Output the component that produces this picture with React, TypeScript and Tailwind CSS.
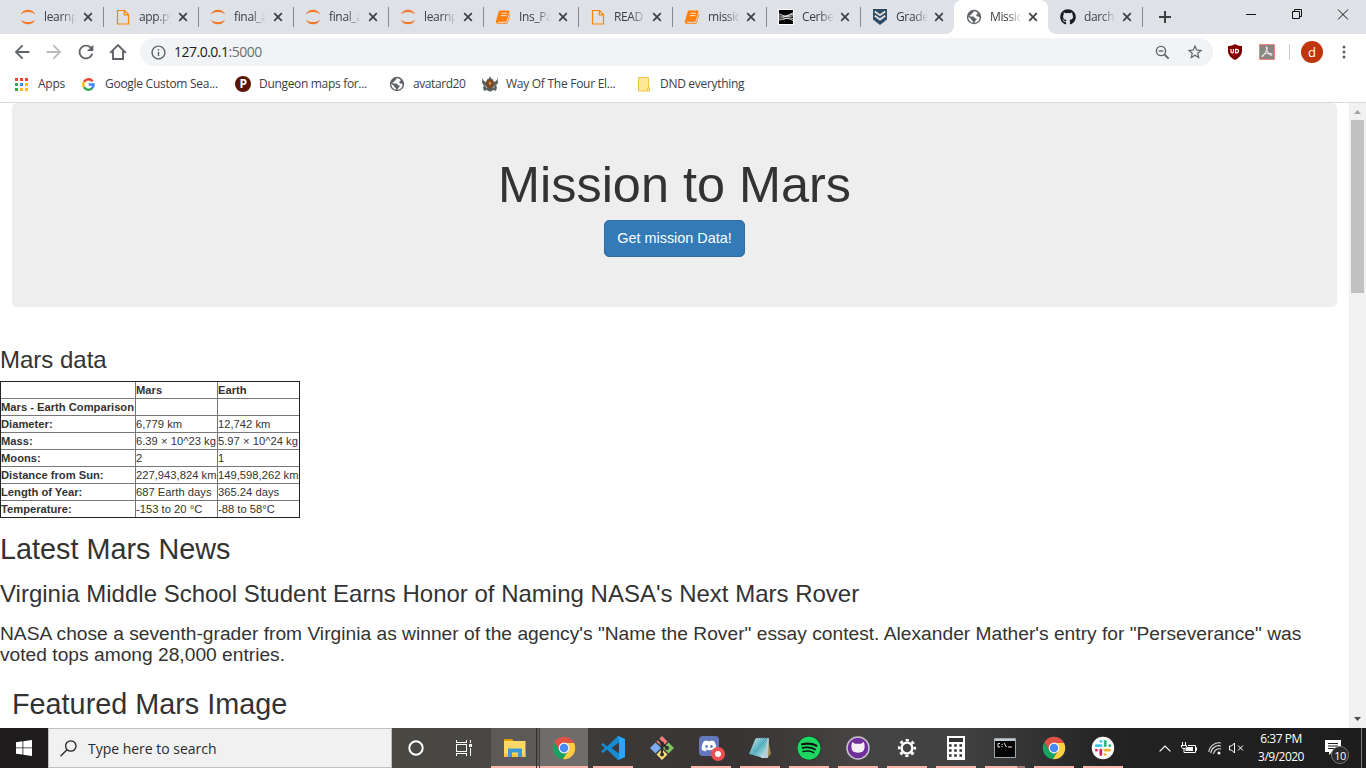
import type { ReactNode } from "react";
import { FaGithub, FaSpotify, FaDiscord } from "react-icons/fa";
import { MdArrowBack, MdArrowForward, MdRefresh, MdInfoOutline, MdStarBorder } from "react-icons/md";

function Globe() {
  return (
    <svg width="16" height="16" viewBox="0 0 16 16">
      <circle cx="8" cy="8" r="7.200" fill="#5f6368" />
      <path d="M7.600 2.200c-.8.900-.2 1.600-1.300 2-1.200.3-.6 1.700-1.800 1.900-.9.200-1 .9-.4 1.400h3.200c1.100 0 1.300.9 1.300 1.700h1.300c1 0 1 1.500.1 2.100-.9.500-.8 1.500-1.700 2.500 3-.2 5.200-2.600 5.400-5.400-.9-.2-1.100-.9-1.900-.9-1.200 0-1.700-.6-1.500-1.500.2-.8 1.300-.9 1.400-1.800-.1-.9-2.300-2.200-4.100-2ZM2.200 7.800c0 3 2.100 5.500 4.900 5.900.1-1.100-.2-1.600-1-2-.9-.4-.5-1.500-1.300-2Z" fill="#fff" />
    </svg>
  );
}

function Jupyter() {
  return (
    <svg width="16" height="16" viewBox="0 0 16 16" fill="#f37726">
      <path d="M.7 5.600C1.900 2.400 4.900.7 8 .7s6.100 1.700 7.300 4.900C13.400 3.800 10.800 3 8 3S2.600 3.800.7 5.600Z" />
      <path d="M.7 10.400c1.200 3.200 4.200 4.900 7.300 4.900s6.100-1.700 7.300-4.900C13.400 12.200 10.800 13 8 13s-5.400-.8-7.300-2.600Z" />
    </svg>
  );
}

function FileIcon() {
  return (
    <svg width="16" height="16" viewBox="0 0 16 16" fill="none" stroke="#ff8400" strokeWidth="1.200">
      <path d="M2.500 1.500h7l4 4v9.500h-11zM9.300 1.500v4.300h4.200" />
    </svg>
  );
}

function BookIcon() {
  return (
    <svg width="16" height="16" viewBox="0 0 16 16">
      <path d="M5.200 1.500h8.100c1 0 1.400.7 1.100 1.600l-2.600 8.500c-.2.700-.8 1.100-1.500 1.100H3.500c-.8 0-1.100.7-.5 1.100h7.800c.8 0 1.300-.4 1.500-1.100l2.400-7.900.5.900-2.300 7.600c-.3 1-1 1.500-2 1.500H3c-1.600 0-2.700-1.500-2-2.900L3.700 2.600c.3-.7.8-1.100 1.500-1.100Z" fill="#ff7f0e" />
      <path d="M6.600 4.300h5.500M5.900 6.600h5.500" stroke="#ffe0c0" strokeWidth="1" />
    </svg>
  );
}

function CerberusIcon() {
  return (
    <svg width="16" height="16" viewBox="0 0 16 16">
      <path fill="#fff" d="M0 0h16v16H0z" />
      <path fill="#000" d="M1 1h14v14H1z" />
      <path d="M1 5c4 .5 5 4 14 0M1 7c4 0 7 1.500 14-.2M1 9c5 .5 8-3 14-5M1 11c5-.5 7-3 14-1.500M5 10.500c4-2 6-1 10 1" stroke="#fff" strokeWidth=".8" fill="none" />
    </svg>
  );
}

function ShieldIcon() {
  return (
    <svg width="16" height="18" viewBox="0 0 16 18">
      <path d="M1 1h14v10.500L8 17l-7-5.500Z" fill="#2d4a63" />
      <path d="m2.800 3.500 5.200 3.700 5.200-3.700M2.800 7.800 8 11.500l5.200-3.700" stroke="#dee1e6" strokeWidth="1.900" fill="none" />
    </svg>
  );
}

const tabs: { title: string; icon: ReactNode }[] = [
  { title: "learnp", icon: <Jupyter /> },
  { title: "app.py", icon: <FileIcon /> },
  { title: "final_a", icon: <Jupyter /> },
  { title: "final_a", icon: <Jupyter /> },
  { title: "learnp", icon: <Jupyter /> },
  { title: "Ins_Pa", icon: <BookIcon /> },
  { title: "READ", icon: <FileIcon /> },
  { title: "missic", icon: <BookIcon /> },
  { title: "Cerbe", icon: <CerberusIcon /> },
  { title: "Grade", icon: <ShieldIcon /> },
  { title: "Missic", icon: <Globe /> },
  { title: "darch", icon: <FaGithub size={16} color="#1b1f23" /> },
];

function TabStrip() {
  return (
    <div className="flex h-[34px] bg-[#dee1e6] pl-2">
      {tabs.map((t, i) => {
        const active = i === 10;
        const line = i > 0 && i < 10;
        return (
          <div
            key={i}
            className={`relative flex h-[34px] shrink-0 items-center ${i < 6 ? "w-[95px]" : "w-[94px]"} ${active ? "rounded-t-lg bg-white" : ""}`}
          >
            <span className={`h-5 w-px ${line ? "bg-[#85888d]" : ""}`} />
            <span className="ml-[11px] flex w-4 shrink-0 justify-center">{t.icon}</span>
            <span className="ml-2 w-[32px] shrink-0 whitespace-nowrap text-[12px] leading-4 tracking-[-0.35px] text-[#3c4043] [mask-image:linear-gradient(to_right,black_55%,transparent_100%)]">
              {t.title}
            </span>
            <svg className={`shrink-0 ${i < 6 ? "ml-[7px]" : "ml-[6px]"}`} width="10" height="10" viewBox="0 0 10 10" stroke="#3c4043" strokeWidth="1.700">
              <path d="m1.200 1.200 7.600 7.600m0-7.600L1.200 8.800" />
            </svg>
            {active && (
              <>
                <span className="absolute bottom-0 -left-2 size-2 bg-[radial-gradient(circle_at_0_0,transparent_7.500px,#fff_8px)]" />
                <span className="absolute -right-2 bottom-0 size-2 bg-[radial-gradient(circle_at_100%_0,transparent_7.500px,#fff_8px)]" />
              </>
            )}
          </div>
        );
      })}
      <span className="mt-[7px] h-5 w-px bg-[#85888d]" />
      <svg className="mt-[11px] ml-4" width="12" height="12" viewBox="0 0 12 12" stroke="#3c4043" strokeWidth="2">
        <path d="M6 0v12M0 6h12" />
      </svg>
      <svg className="mt-[9px] ml-[75px]" width="104" height="12" viewBox="0 0 104 12" fill="none" stroke="#111" strokeWidth="1">
        <path d="M0 5.500h10M46.500 2.500h7v7h-7zM48.500 2.500v-2h7v7h-2M92 .5l10 10M102 .5l-10 10" />
      </svg>
    </div>
  );
}

function Toolbar() {
  return (
    <div className="flex h-9 items-center bg-white pl-[11px] text-[#5f6368]">
      <MdArrowBack size={22} />
      <MdArrowForward size={22} className="ml-[10px] text-[#bababa]" />
      <MdRefresh size={22} className="ml-[10px]" />
      <svg className="ml-3" width="18" height="18" viewBox="0 0 18 18" fill="none" stroke="currentColor" strokeWidth="1.900">
        <path d="M1.200 9.800 9 2l7.800 7.800M4 8v8h10V8" />
      </svg>
      <div className="ml-[13px] flex h-7 w-[1073px] items-center rounded-full bg-[#f1f3f4] pl-[10px]">
        <MdInfoOutline size={17} />
        <span className="ml-[7px] w-[970px] text-[14px] leading-5 tracking-[-0.51px] text-[#202124]">
          127.0.0.1<span className="text-[#6b6f73]">:5000</span>
        </span>
        <svg className="ml-[11px]" width="15" height="15" viewBox="0 0 15 15" fill="none" stroke="currentColor" strokeWidth="1.400">
          <circle cx="6" cy="6" r="4.600" />
          <path d="M3.800 6h4.400" />
          <path d="m9.300 9.300 4.400 4.400" strokeWidth="1.900" />
        </svg>
        <MdStarBorder size={18} className="ml-4" />
      </div>
      <svg className="ml-[14px]" width="16" height="16" viewBox="0 0 16 16">
        <path d="M8 0c2.200 1.400 4.500 2 7 2v5c0 4-3 7-7 9-4-2-7-5-7-9V2c2.500 0 4.800-.6 7-2Z" fill="#800000" />
        <path d="M4 5v2.700a1.200 1.200 0 0 0 2.400 0V5M8.600 5.300h1.200a1.700 1.700 0 0 1 0 3.500H8.600Z" stroke="#fff" strokeWidth="1.200" fill="none" />
      </svg>
      <svg className="ml-4" width="16" height="16" viewBox="0 0 16 16">
        <path d="M.5.500h15v15H.5z" fill="#8b8586" stroke="#e8897c" />
        <path d="M7.500 3c1.500 0 .5 4-3.800 9.500C2 13 3.500 10 8 9.500s6 .5 4.500 1.500S8 8 7.500 5s0-2 0-2Z" stroke="#e6e2e2" strokeWidth="1.100" fill="none" />
      </svg>
      <span className="ml-[14px] h-4 w-px bg-[#c8cacd]" />
      <span className="ml-[11px] flex size-[22px] items-center justify-center rounded-full bg-[#bf360c] text-[13px] leading-4 text-white">d</span>
      <svg className="ml-[19px]" width="4" height="14" viewBox="0 0 4 14" fill="currentColor">
        <circle cx="2" cy="2" r="1.500" />
        <circle cx="2" cy="7" r="1.500" />
        <circle cx="2" cy="12" r="1.500" />
      </svg>
    </div>
  );
}

function AppsIcon() {
  const colors = ["#ea4335", "#ea4335", "#ea4335", "#34a853", "#4285f4", "#fbbc05", "#34a853", "#fbbc05", "#fbbc05"];
  return (
    <svg width="13" height="13" viewBox="0 0 13 13" shapeRendering="crispEdges">
      {colors.map((c, i) => (
        <rect key={i} x={(i % 3) * 5} y={Math.floor(i / 3) * 5} width="3" height="3" fill={c} />
      ))}
    </svg>
  );
}

function Bookmarks() {
  return (
    <div className="flex h-8 items-center bg-white pb-1 pl-[15px] text-[12px] leading-4 whitespace-nowrap text-[#3c4043]">
      <span className="flex w-[67px] items-center gap-[10px] tracking-[-0.25px]"><AppsIcon />Apps</span>
      <span className="flex w-[153px] items-center gap-[10px] tracking-[-0.28px]">
        <svg width="13" height="13" viewBox="0 0 13 13" fill="none" strokeWidth="2.400">
          <path d="M10.600 3.200A5.200 5.200 0 0 0 2 3.900" stroke="#ea4335" />
          <path d="M2 3.900a5.200 5.200 0 0 0 0 5.200" stroke="#fbbc05" />
          <path d="M2 9.100a5.200 5.200 0 0 0 7.900 1.300" stroke="#34a853" />
          <path d="M9.600 10.600A4.800 4.800 0 0 0 11.600 6.500H6.700" stroke="#4285f4" />
        </svg>
        Google Custom Sea...
      </span>
      <span className="flex w-[154px] items-center gap-2 tracking-[-0.32px]">
        <span className="flex size-4 items-center justify-center rounded-full bg-[#5b1505] text-[12px] leading-none font-bold text-white">P</span>
        Dungeon maps for...
      </span>
      <span className="flex w-[93px] items-center gap-2 tracking-[-0.42px]"><Globe />avatard20</span>
      <span className="flex w-[155px] items-center gap-2 tracking-[-0.27px]">
        <svg width="16" height="16" viewBox="0 0 16 16">
          <path d="M.5.800C.5 3.500 1.500 5.500 4 6l1.500-3L7 2.500 7.500.8h1L9 2.500l1.500.5L12 6c2.500-.5 3.500-2.500 3.500-5.200l.5 6-2 3 1 1.700-1 3.500-2.500-1-3.500 1.800L4.500 14 2 15l-1-3.500L2 9.800l-2-3Z" fill="#586264" />
          <path d="M5.200 4h5.600l1 4-2 3.700L8 13l-1.800-1.300-2-3.700Z" fill="#7d461c" />
          <path d="M8 5 6.300 7.500 8 9.500l1.700-2Z" fill="#c98a48" />
          <path d="M3 9.500 5 12M13 9.500 11 12" stroke="#b9c0c1" />
        </svg>
        Way Of The Four El...
      </span>
      <span className="flex items-center gap-[9px] tracking-[-0.3px]">
        <svg width="14" height="15" viewBox="0 0 14 15">
          <path d="M1.500.500h10v10h1V14h-11z" fill="#ffe793" stroke="#e8c64a" />
          <path d="M10.500 10.500v3" stroke="#e8c64a" />
        </svg>
        DND everything
      </span>
    </div>
  );
}

const rows = [
  ["", "Mars", "Earth"],
  ["Mars - Earth Comparison", "", ""],
  ["Diameter:", "6,779 km", "12,742 km"],
  ["Mass:", "6.39 × 10^23 kg", "5.97 × 10^24 kg"],
  ["Moons:", "2", "1"],
  ["Distance from Sun:", "227,943,824 km", "149,598,262 km"],
  ["Length of Year:", "687 Earth days", "365.24 days"],
  ["Temperature:", "-153 to 20 °C", "-88 to 58°C"],
];

function MarsPage() {
  return (
    <div className="flex h-[625px] overflow-hidden bg-white font-['Liberation_Sans',Arial,sans-serif] text-[#333]">
      <div className="w-[1349px] shrink-0">
        <div className="mr-3 ml-3 flex h-[204px] flex-col items-center rounded-[5px] bg-[#eee] pt-[54px]">
          <h1 className="text-[50.400px] leading-[55px]">Mission to Mars</h1>
          <button className="mt-2 h-[37px] w-[141px] rounded-[5px] border border-[#2e6da4] bg-[#337ab7] pb-[2px] text-[14.400px] leading-[20px] text-white">
            Get mission Data!
          </button>
        </div>
        <h2 className="mt-10 text-[24px] leading-[26px]">Mars data</h2>
        <div className="mt-2 grid w-[300px] grid-cols-[134px_81px_81px] gap-px border border-[#222] bg-[#777] text-[11.200px] leading-4">
          {rows.flatMap((r, i) =>
            r.map((c, j) => (
              <div
                key={`${i}-${j}`}
                className={`h-4 bg-white whitespace-nowrap ${i === 0 || j === 0 ? "font-bold" : ""} ${j === 0 ? "" : "tracking-[0.020px]"}`}
              >
                {c}
              </div>
            )),
          )}
        </div>
        <h1 className="mt-[15px] text-[28.800px] leading-8">Latest Mars News</h1>
        <h2 className="mt-4 text-[24px] leading-[26px]">Virginia Middle School Student Earns Honor of Naming NASA's Next Mars Rover</h2>
        <p className="mt-4 w-[1340px] text-[19.200px] leading-[21px] tracking-[0.008px]">
          NASA chose a seventh-grader from Virginia as winner of the agency's "Name the Rover" essay contest. Alexander Mather's entry for "Perseverance" was voted tops among 28,000 entries.
        </p>
        <h1 className="mt-[23px] ml-3 text-[28.800px] leading-8">Featured Mars Image</h1>
      </div>
      <div className="flex w-[17px] flex-col items-center bg-[#f1f1f1]">
        <svg className="mt-[6px]" width="9" height="6" viewBox="0 0 9 6"><path d="M4.500 1 8 5H1Z" fill="#a3a3a3" /></svg>
        <div className="mt-[5px] h-[173px] w-[13px] bg-[#c1c1c1]" />
        <svg className="mt-auto mb-[6px]" width="9" height="6" viewBox="0 0 9 6"><path d="M4.500 5 8 1H1Z" fill="#505050" /></svg>
      </div>
    </div>
  );
}

function ChromeLogo({ id }: { id: string }) {
  return (
    <svg width="24" height="24" viewBox="0 0 24 24">
      <defs><clipPath id={id}><circle cx="12" cy="12" r="11.200" /></clipPath></defs>
      <g clipPath={`url(#${id})`}>
        <path fill="#df5145" d="M0 0h24v7H12L7.700 14.500 0 3Z" />
        <path fill="#1aa260" d="M0 3 7.500 14.500 12 17l3 0-4 8H0Z" />
        <path fill="#ffcd41" d="M12 7h12v17H10.500L16.300 14.500Z" />
      </g>
      <circle cx="12" cy="12" r="5.400" fill="#f5f5f5" />
      <circle cx="12" cy="12" r="4.200" fill="#4a8af4" />
    </svg>
  );
}

function SlackLogo() {
  return (
    <svg width="24" height="24" viewBox="0 0 24 24" strokeWidth="2.800" strokeLinecap="round">
      <circle cx="12" cy="12" r="11.200" fill="#fff" />
      <path d="M10 5.300h.1M10 9.700H5.300" stroke="#36c5f0" />
      <path d="M14.300 5.300v4.400M18.700 9.700h.1" stroke="#2eb67d" />
      <path d="M14 14.200h4.700M14 18.600h.1" stroke="#ecb22e" />
      <path d="M9.800 14.200v4.400M5.300 14.200h.1" stroke="#e01e5a" />
    </svg>
  );
}

const apps: { icon: ReactNode; line: boolean }[] = [
  {
    line: true,
    icon: (
      <svg width="24" height="24" viewBox="0 0 24 24">
        <path d="M1 3h8l2 2.500H1Z" fill="#e2a003" />
        <path d="M1 5h21.500v16H1Z" fill="#ffd867" />
        <path d="M1 18h21.500v3H1Z" fill="#f5c548" />
        <path d="M5 12.500h14V21h-4v-4.500H9V21H5Z" fill="#3d98dc" />
      </svg>
    ),
  },
  { line: true, icon: <ChromeLogo id="chrome-a" /> },
  {
    line: true,
    icon: (
      <svg width="24" height="24" viewBox="0 0 24 24">
        <path d="m17 0 7 3v18l-7 3-11-10.500L2 17l-2-1.700L4 12 0 8.700 2 7l4 3.500Zm1 6.500L10.500 12l7.500 5.500Z" fill="#168bd2" />
        <path d="m17 0 7 3v18l-7 3 1-2V3Z" fill="#2aa7f2" />
      </svg>
    ),
  },
  {
    line: false,
    icon: (
      <svg width="26" height="26" viewBox="0 0 26 26">
        <path d="m13 1 5.500 5.500-5.500 5.500-5.500-5.500Z" fill="#f07c7c" />
        <path d="m6.500 7.500 5.500 5.500-5.500 5.500L1 13Z" fill="#7badf4" />
        <path d="m19.500 7.500L25 13l-5.500 5.500L14 13Z" fill="#80c564" />
        <path d="m13 14 5.500 5.500L13 25l-5.500-5.500Z" fill="#f8dc75" />
        <path d="m9 4 4 4v12M13 8l5 5" stroke="#302d2c" strokeWidth="2" fill="none" />
        <g fill="#302d2c"><circle cx="13" cy="8.500" r="2" /><circle cx="18" cy="13" r="2" /><circle cx="13" cy="19.500" r="2" /></g>
      </svg>
    ),
  },
  {
    line: true,
    icon: (
      <span className="relative flex size-6 items-center justify-center">
        <span className="mr-1 mb-1 flex size-5 shrink-0 items-center justify-center rounded bg-[#6378bd]"><FaDiscord size={16} color="#fff" /></span>
        <span className="absolute -right-[2px] -bottom-px flex size-[14px] items-center justify-center rounded-full bg-[#f04f51]"><span className="size-[6px] rounded-full bg-white" /></span>
      </span>
    ),
  },
  {
    line: true,
    icon: (
      <svg width="24" height="24" viewBox="0 0 24 24">
        <defs><linearGradient id="note" x1="0" y1="0" x2="1" y2="1"><stop stopColor="#d6f2f5" /><stop offset=".5" stopColor="#58aebf" /><stop offset="1" stopColor="#d9eff2" /></linearGradient></defs>
        <path d="m20 3 3 15-4 4Z" fill="#9e8350" />
        <path d="M8 2h13l-1 20-7 0Z" fill="#b9cdd0" />
        <path d="M7.500 2.500 19.500 2l-3.500 20L1 18Z" fill="url(#note)" />
        <path d="M8 1.700h12.500" stroke="#45575b" strokeWidth="1.500" strokeDasharray="1 1" />
      </svg>
    ),
  },
  { line: true, icon: <span className="flex size-6 items-center justify-center rounded-full bg-[#111]"><FaSpotify size={24} color="#1ed760" /></span> },
  {
    line: true,
    icon: (
      <svg width="24" height="24" viewBox="0 0 24 24">
        <circle cx="12" cy="12" r="11" fill="#6e2f9b" stroke="#c9c1d0" strokeWidth="1.500" />
        <path d="M6.300 6 9 7.800h6L17.700 6c.8 1.500.9 3 .9 4.800 0 4.500-2.600 5.900-6.600 5.900s-6.600-1.400-6.600-5.900c0-1.800.1-3.300.9-4.800Z" fill="#f4eff5" />
      </svg>
    ),
  },
  {
    line: true,
    icon: (
      <svg width="20" height="20" viewBox="0 0 20 20" fill="none" stroke="#fff">
        <circle cx="10" cy="10" r="5.400" strokeWidth="2.400" />
        <circle cx="10" cy="10" r="7.800" strokeWidth="2.600" strokeDasharray="3.063" strokeDashoffset="1.530" />
      </svg>
    ),
  },
  {
    line: true,
    icon: (
      <svg width="18" height="24" viewBox="0 0 18 24">
        <path d="M0 0h18v24H0z" fill="#fff" />
        <path d="M2 2h14v4H2z" fill="#333" />
        <path d="M2 9.500h13M2 14.500h13M2 19.500h13" stroke="#333" strokeWidth="2.400" strokeDasharray="2.600 2.600" />
      </svg>
    ),
  },
  {
    line: true,
    icon: (
      <svg width="22" height="20" viewBox="0 0 22 20">
        <path d="M.5.500h21v19H.5z" fill="#050505" stroke="#9eaab0" />
        <path d="M1 1h20v2H1z" fill="#c1c8cc" />
        <path d="M6 5.500H4v3.500h2M8 6v1M8 8v1M10 5l2.500 4M14 9h4" stroke="#e6e6e6" fill="none" />
      </svg>
    ),
  },
  { line: true, icon: <ChromeLogo id="chrome-b" /> },
  { line: true, icon: <SlackLogo /> },
];

function Taskbar() {
  return (
    <div className="flex h-10 bg-[linear-gradient(to_right,#1f1c1d_0px,#1f1c1d_48px,#494843_392px,#484743_500px,#3b3938_620px,#383433_740px,#454443_850px,#434242_960px,#242323_1110px,#1d1d1d_1366px)] text-white">
      <div className="flex w-12 items-center justify-center">
        <svg width="16" height="16" viewBox="0 0 16 16" fill="#fff"><path d="M0 2.200 6.500 1.300v6.200H0zM7.300 1.200 16 0v7.500H7.300zM0 8.300h6.500v6.300L0 13.700zM7.300 8.300H16V16l-8.700-1.300z" /></svg>
      </div>
      <div className="flex w-[344px] items-center border border-[#bfbfbf] bg-[#f1f1f1] pl-[11px] text-[#2b2b2b]">
        <svg width="17" height="17" viewBox="0 0 17 17" fill="none" stroke="#222" strokeWidth="1.300"><circle cx="10.800" cy="6" r="5.200" /><path d="M7 9.800.5 16.300" /></svg>
        <span className="mt-[2px] ml-[11px] text-[14px] leading-5 tracking-[-0.020px] whitespace-nowrap">Type here to search</span>
      </div>
      <div className="flex w-12 items-center justify-center">
        <svg width="16" height="16" viewBox="0 0 16 16" fill="none" stroke="#fff" strokeWidth="2"><circle cx="8" cy="8" r="6.700" /></svg>
      </div>
      <div className="mr-[3px] flex w-12 items-center justify-center">
        <svg width="16" height="16" viewBox="0 0 16 16" fill="none" stroke="#fff" shapeRendering="crispEdges"><path d="M.5 0v2.500h10V0M.5 4.500h10v7H.5zM.5 16v-2.500h10V16M14.500 0v3M14.500 8v8" /><path d="M13 4h3v3h-3z" fill="#fff" stroke="none" /></svg>
      </div>
      {apps.map((a, i) => (
        <div
          key={i}
          className={`relative mr-px flex w-12 shrink-0 flex-col items-center ${i === 0 ? "bg-[#5b5a56]" : i === 1 ? "bg-[#6e6d6b]" : ""}`}
        >
          <div className="flex h-[38px] items-center pt-[2px]">{a.icon}</div>
          {a.line && <div className={`h-[2px] bg-[#ffb5ac] ${i < 2 ? "w-12" : "w-10"}`} />}
          {i === 0 && <div className="absolute top-0 right-[2px] h-10 w-px bg-[#302f2d]" />}
          {i === 10 && <div className="absolute right-1 bottom-0 h-[2px] w-2 bg-[#a67b78]" />}
        </div>
      ))}
      <div className="ml-[31px] flex shrink-0 items-center">
        <svg width="12" height="7" viewBox="0 0 12 7" fill="none" stroke="#fff" strokeWidth="1.200"><path d="M.6 6.400 6 1l5.400 5.400" /></svg>
        <svg className="ml-[10px]" width="16" height="12" viewBox="0 0 16 12" fill="none" stroke="#fff"><path d="M1.500 0v3M4.500 0v3M0 3.500h5.500v1.700L4 6.500H2L.5 5.200V3.500M3 6.500v4h11.500v-7H7M14.500 5.500h1v3h-1" /><path d="M6 5h6v4H4.500V7Z" fill="#fff" stroke="none" /></svg>
        <svg className="ml-[11px]" width="14" height="14" viewBox="0 0 14 14" fill="none" stroke="#ddd" strokeWidth="1.100"><path d="M.8 11A10.300 10.300 0 0 1 13 2M2.800 12.300A8 8 0 0 1 13 5M5.500 13A6 6 0 0 1 13 8" /><circle cx="11" cy="12" r="1.500" fill="#fff" stroke="none" /></svg>
        <svg className="ml-[7px]" width="15" height="12" viewBox="0 0 15 12" fill="none" stroke="#fff"><path d="M.5 4H2.500L5.500 1v10L2.500 8H.5zM9 3.500l5 5M14 3.500l-5 5" /></svg>
      </div>
      <div className="ml-[4px] flex w-[66px] shrink-0 flex-col items-center pt-[2px] text-[12px] leading-[18px] tracking-[-0.500px] whitespace-nowrap">
        <span>6:37 PM</span><span>3/9/2020</span>
      </div>
      <div className="relative ml-[11px] h-10 w-[26px] shrink-0">
        <svg className="mt-3" width="17" height="15" viewBox="0 0 17 15"><path d="M0 0h16v12H7l-3 3v-3H0Z" fill="#fff" /><path d="M3 3.500h10M3 6h10M3 8.500h10" stroke="#222" /></svg>
        <span className="absolute top-[18px] left-[6px] flex size-[18px] items-center justify-center rounded-full border border-[#777] bg-[#292929] text-[11px] leading-none tracking-[-0.500px]">10</span>
      </div>
      <span className="ml-[10px] h-10 w-px bg-[#777]" />
    </div>
  );
}

export default function App() {
  return (
    <div className="h-[768px] w-[1366px] overflow-hidden bg-white font-['Open_Sans','Noto_Sans',sans-serif]">
      <TabStrip />
      <Toolbar />
      <Bookmarks />
      <div className="h-px bg-[#d8d9db]" />
      <MarsPage />
      <Taskbar />
    </div>
  );
}
